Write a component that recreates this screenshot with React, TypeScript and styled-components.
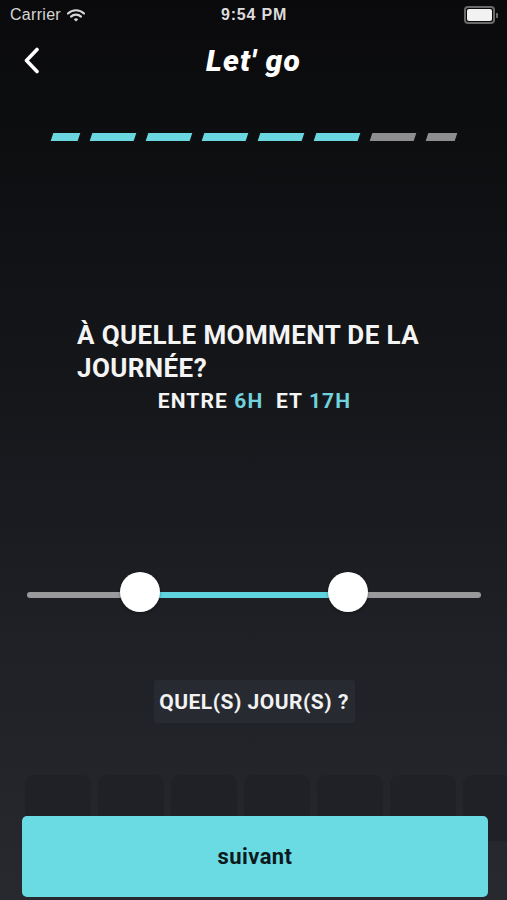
import React from "react";
import styled, { createGlobalStyle } from "styled-components";

const Global = createGlobalStyle`
  html, body { margin: 0; padding: 0; }
  body {
    background: #0b0c0e;
    font-family: Roboto, "Noto Sans", "Liberation Sans", sans-serif;
    -webkit-font-smoothing: antialiased;
  }
`;

const Screen = styled.div`
  position: relative;
  width: 507px;
  height: 900px;
  overflow: hidden;
  background: linear-gradient(180deg, #0a0a0c 0%, #0d0e10 15%, #16171b 45%, #1e2025 70%, #27292f 100%);
  display: flex;
  flex-direction: column;
  color: #fff;
`;

const StatusBar = styled.div`
  height: 30px;
  display: grid;
  grid-template-columns: 1fr auto 1fr;
  align-items: center;
  padding: 0 9px 0 10px;
  color: #d6d6d6;
`;

const Carrier = styled.div`
  display: flex;
  align-items: center;
  gap: 6px;
  font-family: "Liberation Sans", Arial, sans-serif;
  font-size: 16px;
  letter-spacing: 0.3px;
`;

const Time = styled.div`
  font-family: "Liberation Sans", Arial, sans-serif;
  font-weight: 700;
  font-size: 16px;
  letter-spacing: 0.8px;
  color: #dcdcdc;
`;

const Battery = styled.div`
  justify-self: end;
  display: flex;
  align-items: center;
`;

const BatteryBody = styled.div`
  width: 25px;
  height: 12px;
  border: 2px solid #6a6a6a;
  border-radius: 4px;
  padding: 1px;
  box-sizing: content-box;
  display: flex;
`;

const BatteryFill = styled.div`
  flex: 1;
  background: #f2f2f2;
  border-radius: 2px;
`;

const BatteryCap = styled.div`
  width: 2px;
  height: 5px;
  background: #6a6a6a;
  border-radius: 0 1px 1px 0;
  margin-left: 1px;
`;

const NavBar = styled.div`
  height: 60px;
  display: grid;
  grid-template-columns: 60px 1fr 60px;
  align-items: center;
`;

const BackButton = styled.div`
  display: flex;
  align-items: center;
  padding-left: 23px;
`;

const Title = styled.h1`
  margin: 0;
  text-align: center;
  font-family: Roboto, "Liberation Sans", sans-serif;
  font-style: italic;
  font-weight: 900;
  font-size: 30px;
  color: #fff;
  letter-spacing: 1.2px;
`;

const Progress = styled.div`
  margin: 43px 0 0 52px;
  display: flex;
  gap: 12px;
  height: 8px;
`;

const Dash = styled.div<{ $w: number; $active: boolean }>`
  width: ${(p) => p.$w}px;
  height: 8px;
  background: ${(p) => (p.$active ? "#6ad6e0" : "#8e8e90")};
  transform: skewX(-18deg);
`;

const Question = styled.div`
  margin: 178px 0 0 77px;
  font-weight: 700;
  font-size: 26px;
  line-height: 33px;
  letter-spacing: 0.4px;
  color: #f4f4f4;
  width: 380px;
`;

const Range = styled.div`
  margin-top: 4px;
  text-align: center;
  font-weight: 700;
  font-size: 21px;
  letter-spacing: 1.1px;
  color: #f4f4f4;
  padding-left: 2px;
`;

const Accent = styled.span`
  color: #6fd2dc;
`;

const SliderWrap = styled.div`
  margin: 159px 26px 0 27px;
  position: relative;
  height: 40px;
  display: flex;
  align-items: center;
`;

const Track = styled.div`
  flex: 1;
  height: 6px;
  border-radius: 3px;
  background: #9a9a9c;
  position: relative;
  margin-top: 6px;
`;

const TrackFill = styled.div`
  position: absolute;
  top: 0;
  bottom: 0;
  background: #5fd4de;
`;

const Thumb = styled.div`
  position: absolute;
  top: 50%;
  width: 40px;
  height: 40px;
  margin: -23px 0 0 -20px;
  border-radius: 50%;
  background: #fff;
  box-shadow: 0 1px 3px rgba(0, 0, 0, 0.35);
`;

const DaysSection = styled.div`
  margin-top: 68px;
  display: flex;
  flex-direction: column;
  align-items: center;
`;

const DaysLabel = styled.div`
  background: #272a30;
  border-radius: 3px;
  padding: 0 6px 0 5px;
  height: 43px;
  display: flex;
  align-items: center;
  font-weight: 700;
  font-size: 21px;
  color: #f2f2f2;
  letter-spacing: 0.5px;
  margin-left: 2px;
`;

const DaysRow = styled.div`
  align-self: stretch;
  margin-top: 52px;
  padding-left: 25px;
  display: flex;
  gap: 7px;
  overflow: hidden;
`;

const DayBox = styled.div`
  flex: 0 0 66px;
  height: 66px;
  border-radius: 9px;
  background: #1f2126;
`;

const NextButton = styled.button`
  position: absolute;
  left: 22px;
  right: 19px;
  bottom: 3px;
  height: 81px;
  border: none;
  border-radius: 5px;
  background: #6adbe3;
  color: #0c1a1e;
  font-family: Roboto, "Liberation Sans", sans-serif;
  font-weight: 700;
  font-size: 22px;
  letter-spacing: 0.4px;
  cursor: pointer;
`;

const dashes = [
  { w: 27, a: true },
  { w: 44, a: true },
  { w: 44, a: true },
  { w: 44, a: true },
  { w: 44, a: true },
  { w: 44, a: true },
  { w: 44, a: false },
  { w: 29, a: false },
];

export default function App() {
  const t1 = 113;
  const t2 = 321;
  return (
    <>
      <Global />
      <Screen>
        <StatusBar>
          <Carrier>
            Carrier
            <svg width="18" height="13" viewBox="0 0 18 13">
              <path d="M1 4.5 A11.5 11.5 0 0 1 17 4.5" stroke="#d6d6d6" strokeWidth="2.2" fill="none" strokeLinecap="round" />
              <path d="M4 7.6 A7.2 7.2 0 0 1 14 7.6" stroke="#d6d6d6" strokeWidth="2.2" fill="none" strokeLinecap="round" />
              <path d="M6.8 10.4 A3 3 0 0 1 11.2 10.4 L9 12.6 Z" fill="#d6d6d6" />
            </svg>
          </Carrier>
          <Time>9:54 PM</Time>
          <Battery>
            <BatteryBody>
              <BatteryFill />
            </BatteryBody>
            <BatteryCap />
          </Battery>
        </StatusBar>
        <NavBar>
          <BackButton>
            <svg width="17" height="27" viewBox="0 0 17 27">
              <path d="M14 2.5 L3.5 13.5 L14 24.5" stroke="#fff" strokeWidth="3.6" fill="none" strokeLinecap="round" strokeLinejoin="round" />
            </svg>
          </BackButton>
          <Title>Let' go</Title>
          <div />
        </NavBar>
        <Progress>
          {dashes.map((d, i) => (
            <Dash key={i} $w={d.w} $active={d.a} />
          ))}
        </Progress>
        <Question>À QUELLE MOMMENT DE LA JOURNÉE?</Question>
        <Range>
          ENTRE <Accent>6H</Accent>&nbsp; ET <Accent>17H</Accent>
        </Range>
        <SliderWrap>
          <Track>
            <TrackFill style={{ left: t1, width: t2 - t1 }} />
            <Thumb style={{ left: t1 }} />
            <Thumb style={{ left: t2 }} />
          </Track>
        </SliderWrap>
        <DaysSection>
          <DaysLabel>QUEL(S) JOUR(S) ?</DaysLabel>
          <DaysRow>
            {Array.from({ length: 7 }).map((_, i) => (
              <DayBox key={i} />
            ))}
          </DaysRow>
        </DaysSection>
        <NextButton>suivant</NextButton>
      </Screen>
    </>
  );
}
